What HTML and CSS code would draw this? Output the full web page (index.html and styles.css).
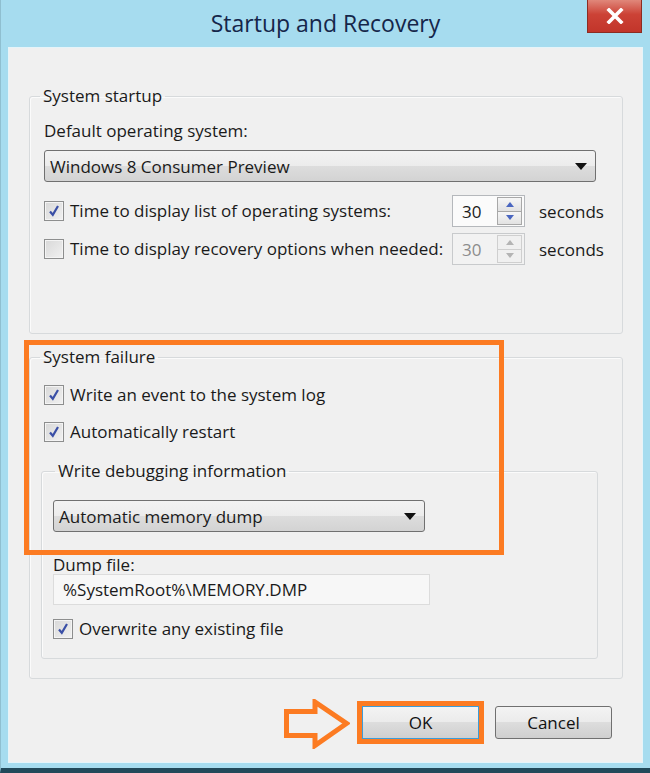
FILE: index.html
```html
<!DOCTYPE html>
<html lang="en">
<head>
  <meta charset="UTF-8" />
  <title>Startup and Recovery</title>
  <link rel="stylesheet" href="styles.css">
</head>
<body>
  <div class="window">
    <div class="titlebar">
      <h1 class="title">Startup and Recovery</h1>
      <button class="close" aria-label="Close">
        <svg width="18" height="16" viewBox="0 0 18 16"><path d="M3 2 L15 14 M15 2 L3 14" stroke="#fff" stroke-width="3.6" stroke-linecap="square"/></svg>
      </button>
    </div>

    <div class="client">
      <fieldset class="group group-startup">
        <legend>System startup</legend>
        <div class="field-label">Default operating system:</div>
        <div class="combo combo-os">
          <span>Windows 8 Consumer Preview</span>
          <span class="combo-arrow"></span>
        </div>

        <div class="time-row first">
          <label class="check"><span class="box checked"><svg width="14" height="14" viewBox="0 0 14 14"><path d="M3 7.5 L5.8 10.8 L11 2" fill="none" stroke="#3a4fa6" stroke-width="2.2"/></svg></span>Time to display list of operating systems:</label>
          <div class="spin">
            <span class="spin-value">30</span>
            <span class="spin-btns">
              <span class="spin-btn"><span class="tri-up"></span></span>
              <span class="spin-btn"><span class="tri-down"></span></span>
            </span>
          </div>
          <span class="unit">seconds</span>
        </div>

        <div class="time-row">
          <label class="check"><span class="box"></span>Time to display recovery options when needed:</label>
          <div class="spin disabled">
            <span class="spin-value">30</span>
            <span class="spin-btns">
              <span class="spin-btn"><span class="tri-up"></span></span>
              <span class="spin-btn"><span class="tri-down"></span></span>
            </span>
          </div>
          <span class="unit">seconds</span>
        </div>
      </fieldset>

      <fieldset class="group group-failure">
        <legend>System failure</legend>
        <label class="check row-log"><span class="box checked"><svg width="14" height="14" viewBox="0 0 14 14"><path d="M3 7.5 L5.8 10.8 L11 2" fill="none" stroke="#3a4fa6" stroke-width="2.2"/></svg></span>Write an event to the system log</label>
        <label class="check row-restart"><span class="box checked"><svg width="14" height="14" viewBox="0 0 14 14"><path d="M3 7.5 L5.8 10.8 L11 2" fill="none" stroke="#3a4fa6" stroke-width="2.2"/></svg></span>Automatically restart</label>

        <fieldset class="group group-debug">
          <legend>Write debugging information</legend>
          <div class="combo combo-dump">
            <span>Automatic memory dump</span>
            <span class="combo-arrow"></span>
          </div>
          <div class="field-label dump-label">Dump file:</div>
          <div class="textbox">%SystemRoot%\MEMORY.DMP</div>
          <label class="check row-overwrite"><span class="box checked"><svg width="14" height="14" viewBox="0 0 14 14"><path d="M3 7.5 L5.8 10.8 L11 2" fill="none" stroke="#3a4fa6" stroke-width="2.2"/></svg></span>Overwrite any existing file</label>
        </fieldset>
      </fieldset>

      <div class="buttons">
        <button class="btn btn-ok">OK</button>
        <button class="btn">Cancel</button>
      </div>

      <!-- annotations -->
      <div class="highlight"></div>
      <svg class="arrow" width="66" height="50" viewBox="0 0 66 50">
        <path d="M2.5 12.5 H31 V3 L62.5 24.5 L31 46.5 V36.5 H2.5 Z" fill="none" stroke="#fc7b22" stroke-width="5" stroke-linejoin="miter"/>
      </svg>
    </div>
  </div>
</body>
</html>
```

FILE: styles.css
```css
body {
  margin: 0;
  font-family: "Open Sans", "Noto Sans", sans-serif;
  color: #1a1a1a;
}

.window {
  width: 650px;
  height: 773px;
  box-sizing: border-box;
  padding: 0 8px 6px;
  background-color: #a6dcef;
  border-left: 1px solid #8fbfd0;
  border-bottom: 5px solid #21495a;
}

/* Title bar */
.titlebar {
  position: relative;
  height: 48px;
  display: flex;
  align-items: center;
  justify-content: center;
}

.title {
  margin: 0 0 2px;
  font-size: 23px;
  font-weight: normal;
  color: #15264a;
}

.close {
  position: absolute;
  top: 0;
  right: 0;
  width: 55px;
  height: 33px;
  padding: 0;
  border: 1px solid #8c2c22;
  border-top: 0;
  background: linear-gradient(#e0877a, #cc4236 45%, #c2352a);
  display: flex;
  align-items: center;
  justify-content: center;
}

/* Client area */
.client {
  position: relative;
  height: 714px;
  box-sizing: border-box;
  padding: 37px 19px 0 20px;
  background-color: #f0f0f0;
  box-shadow: 0 0 0 1px #e6f4f9;
  font-size: 17px;
}

.group {
  min-width: 0;
  margin: 0;
  padding: 0 25px 0 14px;
  border: 1px solid #d7dadc;
  border-radius: 3px;
  box-shadow: inset 1px 1px 0 #fbfbfb;
}

.group legend {
  padding: 0 3px;
  margin-left: -4px;
  line-height: 22px;
}

.group-startup {
  padding-top: 13px;
  padding-right: 10px;
  padding-bottom: 68px;
}

.field-label {
  line-height: 22px;
}

.combo {
  display: flex;
  align-items: center;
  justify-content: space-between;
  height: 32px;
  box-sizing: border-box;
  padding: 0 8px 0 5px;
  border: 1px solid #707070;
  border-radius: 3px;
  background: linear-gradient(#f2f2f2, #ececec 50%, #dddddd 50%, #d3d3d3);
}

.combo-os {
  margin-top: 8px;
  width: 552px;
}

.combo-arrow {
  width: 0;
  height: 0;
  border-left: 6px solid transparent;
  border-right: 6px solid transparent;
  border-top: 7px solid #111;
}

.time-row {
  display: grid;
  grid-template-columns: 394px 73px auto;
  column-gap: 14px;
  align-items: center;
  margin-top: 6px;
}

.time-row.first {
  margin-top: 13px;
}

.check {
  display: flex;
  align-items: center;
  gap: 6px;
  line-height: 22px;
  white-space: nowrap;
}

.box {
  width: 20px;
  height: 20px;
  box-sizing: border-box;
  border: 1px solid #8d8e8e;
  background: linear-gradient(135deg, #d8d8d8, #f1f1f1);
  box-shadow: inset 0 0 0 1px #f4f4f4;
  display: flex;
  align-items: center;
  justify-content: center;
  flex-shrink: 0;
}

.spin {
  height: 32px;
  box-sizing: border-box;
  display: flex;
  align-items: center;
  justify-content: space-between;
  padding: 1px 2px 1px 9px;
  border: 1px solid #b5b8bc;
  background-color: #fbfbfb;
}

.spin-btns {
  display: flex;
  flex-direction: column;
  width: 25px;
  height: 28px;
}

.spin-btn {
  flex: 1;
  display: flex;
  align-items: center;
  justify-content: center;
  border: 1px solid #a8a8a8;
  background: linear-gradient(#f6f6f6, #e2e2e2);
}

.spin-btn + .spin-btn {
  border-top: 0;
}

.tri-up,
.tri-down {
  width: 0;
  height: 0;
  border-left: 4px solid transparent;
  border-right: 4px solid transparent;
}

.tri-up {
  border-bottom: 5px solid #4a66c0;
}

.tri-down {
  border-top: 5px solid #4a66c0;
}

.spin.disabled {
  border-color: #c8cacc;
  background-color: #f2f2f2;
  color: #8c8c8c;
}

.spin.disabled .spin-btn {
  border-color: #cfcfcf;
  background: #f0f0f0;
}

.spin.disabled .tri-up {
  border-bottom-color: #b4b4b4;
}

.spin.disabled .tri-down {
  border-top-color: #b4b4b4;
}

.group-failure {
  margin-top: 12px;
  padding-top: 16px;
  padding-right: 24px;
  padding-left: 14px;
  padding-bottom: 19px;
}

.row-restart {
  margin-top: 15px;
}

.group-debug {
  margin: 17px 0 0 -3px;
  padding: 18px 0 18px 11px;
}

.group-debug legend {
  margin-left: 2px;
}

.combo-dump {
  width: 372px;
}

.dump-label {
  margin-top: 24px;
  line-height: 18px;
}

.textbox {
  width: 377px;
  height: 31px;
  box-sizing: border-box;
  padding: 0 9px;
  line-height: 29px;
  border: 1px solid #dcdcdc;
  background-color: #f7f7f7;
}

.row-overwrite {
  margin-top: 13px;
}

/* Dialog buttons */
.buttons {
  display: flex;
  justify-content: flex-end;
  gap: 16px;
  margin-top: 27px;
  padding-right: 11px;
}

.btn {
  width: 117px;
  height: 33px;
  border: 1px solid #707070;
  border-radius: 3px;
  background: linear-gradient(#f3f3f3, #ebebeb 50%, #dddddd 50%, #cfcfcf);
  font-family: inherit;
  font-size: 17px;
  color: #111;
}

.btn-ok {
  border-color: #3c9cd8;
  border-radius: 0;
  outline: 5px solid #fc7b22;
}

/* Annotation overlays */
.highlight {
  position: absolute;
  left: 15px;
  top: 292px;
  width: 480px;
  height: 215px;
  box-sizing: border-box;
  border: 5px solid #fc7b22;
}

.arrow {
  position: absolute;
  left: 275px;
  top: 651px;
}
```
